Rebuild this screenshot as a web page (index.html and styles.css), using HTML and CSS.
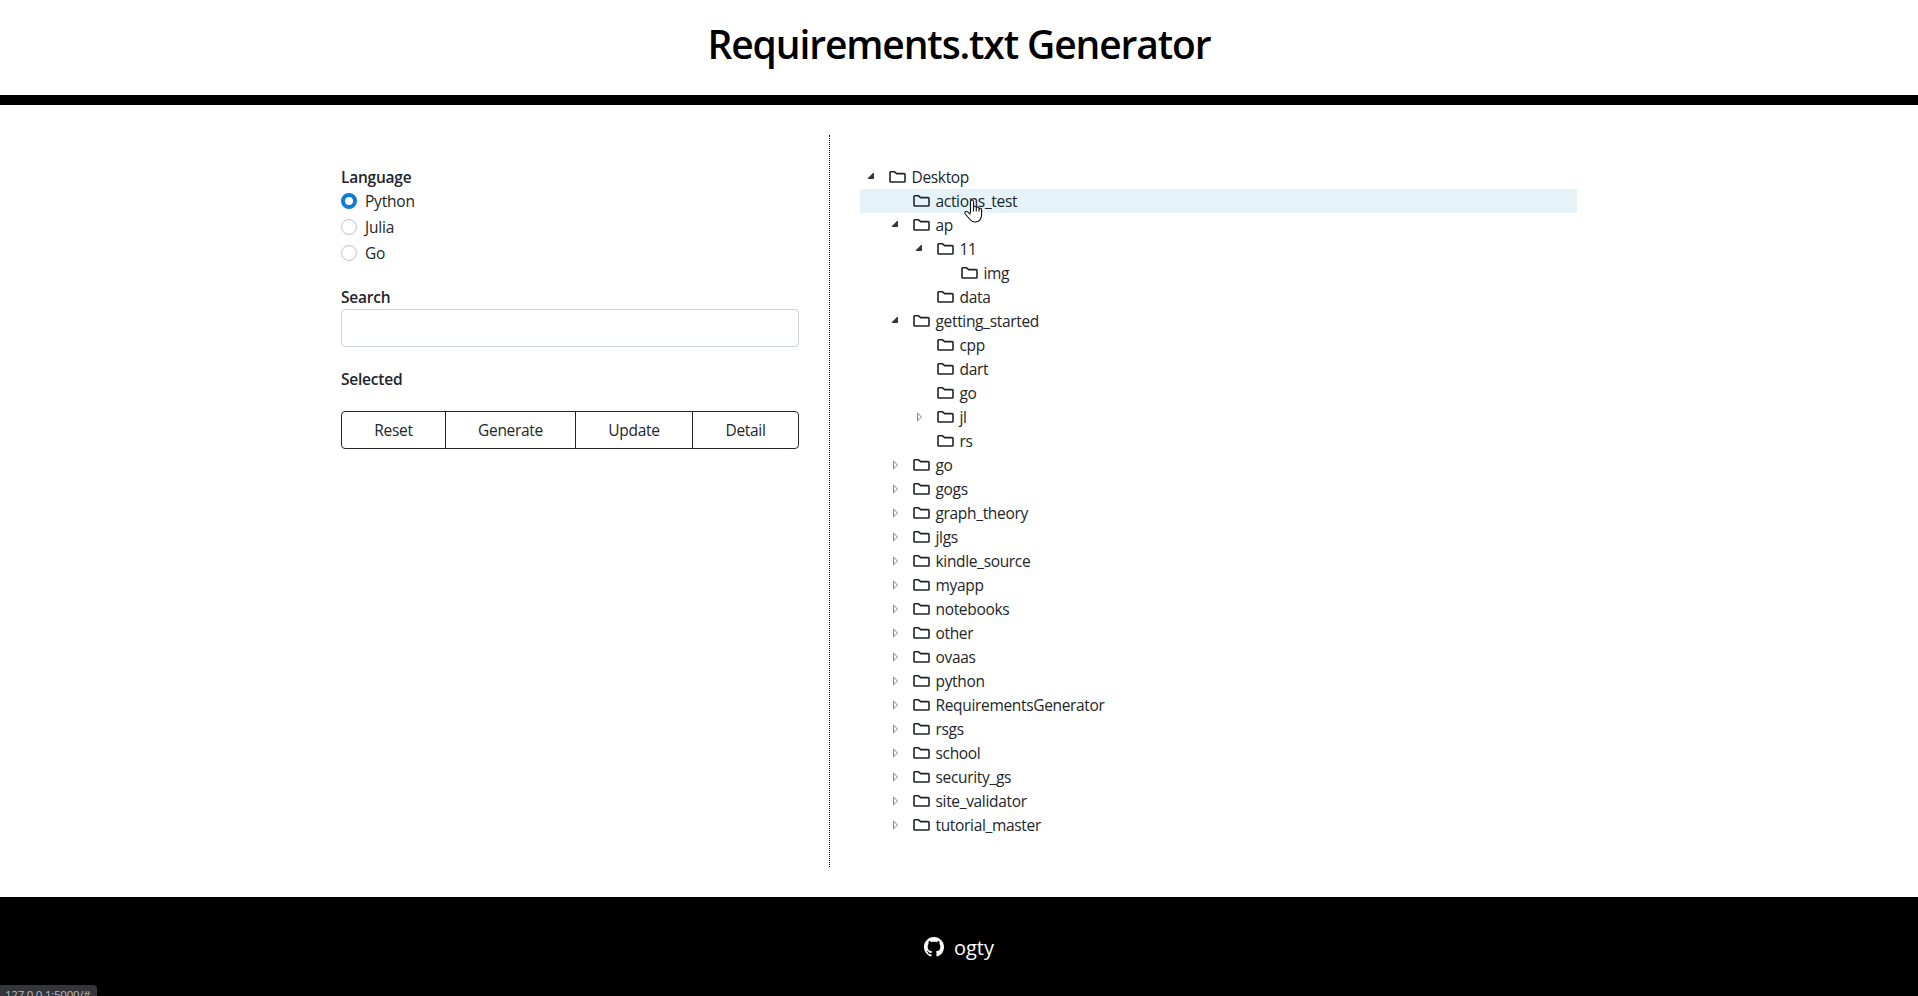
FILE: index.html
```html
<!DOCTYPE html>
<html lang="en">
<head>
<meta charset="utf-8">
<title>Requirements.txt Generator</title>
<link rel="stylesheet" href="styles.css">
</head>
<body>
<svg class="defs" aria-hidden="true">
  <symbol id="folder" viewBox="0 0 17 12"><path d="M1 10.2V1.6Q1 .8 1.8 .8H5.6L7.6 2.6H15.2Q16 2.6 16 3.4V10.2Q16 11 15.2 11H1.8Q1 11 1 10.2Z" fill="none" stroke="#212529" stroke-width="1.6"/></symbol>
  <symbol id="open" viewBox="0 0 8 8"><path d="M6.5 1V6.5H1Z" fill="#402a45" stroke="#212529" stroke-width=".8"/></symbol>
  <symbol id="closed" viewBox="0 0 8 10"><path d="M2.5 1.2V8.8L6.5 5Z" fill="none" stroke="#858585" stroke-width="1"/></symbol>
</svg>
<header class="header"><h1 class="title">Requirements.txt Generator</h1></header>
<main class="main">
  <section class="panel">
    <div class="label">Language</div>
    <div class="radios">
      <label class="radio"><span class="dot dot-on"></span><span>Python</span></label>
      <label class="radio"><span class="dot"></span><span>Julia</span></label>
      <label class="radio"><span class="dot"></span><span>Go</span></label>
    </div>
    <div class="label">Search</div>
    <input class="search" type="text" aria-label="Search">
    <div class="label selected">Selected</div>
    <div class="buttons">
      <button class="btn reset">Reset</button><button class="btn generate">Generate</button><button class="btn update">Update</button><button class="btn detail">Detail</button>
    </div>
  </section>
  <section class="tree" id="tree"></section>
</main>
<footer class="footer">
  <svg class="github" viewBox="0 0 16 16"><path fill="#fff" d="M8 0C3.58 0 0 3.58 0 8c0 3.54 2.29 6.53 5.47 7.59.4.07.55-.17.55-.38 0-.19-.01-.82-.01-1.49-2.01.37-2.53-.49-2.69-.94-.09-.23-.48-.94-.82-1.13-.28-.15-.68-.52-.01-.53.63-.01 1.08.58 1.23.82.72 1.21 1.87.87 2.33.66.07-.52.28-.87.51-1.07-1.78-.2-3.64-.89-3.64-3.95 0-.87.31-1.59.82-2.15-.08-.2-.36-1.02.08-2.12 0 0 .67-.21 2.2.82.64-.18 1.32-.27 2-.27s1.36.09 2 .27c1.53-1.04 2.2-.82 2.2-.82.44 1.1.16 1.92.08 2.12.51.56.82 1.27.82 2.15 0 3.07-1.87 3.75-3.65 3.95.29.25.54.73.54 1.48 0 1.07-.01 1.93-.01 2.2 0 .21.15.46.55.38A8.01 8.01 0 0 0 16 8c0-4.42-3.58-8-8-8z"/></svg>
  <span>ogty</span>
</footer>
<div class="status">127.0.0.1:5000/#</div>
<svg class="cursor" viewBox="0 0 19 24"><path d="M6.5 14V3Q6.5 1 8 1T9.5 3V9Q9.5 7 11 7.2T12.3 9Q12.5 7.8 13.8 8T15 10Q15.3 9 16.5 9.3T17.6 11V16Q17.6 18 16.5 20Q15 23 11 23Q8 23 6 20.5L1.3 15Q.3 13.5 1.5 12.8T4 13.2L6.5 15.5M9.5 9V12.5M12.3 9V12.5M15 10V12.5" fill="#fff" stroke="#111" stroke-width="1.1"/></svg>
<script src="tree.js"></script>
</body>
</html>
```
FILE: styles.css
```css
* { box-sizing: border-box; }
body {
  margin: 0; height: 996px; overflow: hidden; position: relative;
  display: flex; flex-direction: column;
  background: #fff; color: #212529;
  font: 15.5px/24px "Segoe UI", "Open Sans", "Noto Sans", sans-serif;
  letter-spacing: -.2px;
}
.defs { position: absolute; width: 0; height: 0; }
.header { height: 105px; border-bottom: 10px solid #000; text-align: center; }
.title { margin: 0; padding-top: 20px; font-size: 39px; line-height: 48px; font-weight: 600; color: #000; letter-spacing: -1.12px; }
.main { height: 792px; padding: 30px 341px; display: flex; }
.panel { width: 489px; padding: 30px 30px 0 0; border-right: 1px dotted #000; }
.label { height: 24px; font-weight: 600; letter-spacing: -.22px; }
.radios { display: flex; flex-direction: column; gap: 2px; margin-bottom: 20px; }
.radio { display: flex; align-items: center; gap: 8px; height: 24px; }
.dot { width: 16px; height: 16px; border: 1px solid #c0c4c8; border-radius: 50%; }
.dot-on { border: 4.5px solid #0f7ad8; }
.search { display: block; width: 458px; height: 38px; border: 1px solid #ced4da; border-radius: 4px; padding: 6px 12px; font: inherit; outline: none; }
.selected { margin: 20px 0; }
.buttons { display: flex; width: 458px; height: 38px; border: 1px solid #212529; border-radius: 4px; }
.btn { padding: 0; border: 0; border-right: 1px solid #212529; background: none; color: inherit; font: inherit; letter-spacing: -.3px; }
.reset { width: 104px; }
.generate { width: 130px; }
.update { width: 117px; }
.detail { flex: 1; border: 0; }
.tree { flex: 1; padding: 30px 0 0 30px; letter-spacing: -.33px; }
.row { display: flex; align-items: center; height: 24px; padding-left: 7px; }
.row-hover { background: #e5f3f9; }
.d1 { padding-left: 31px; }
.d2 { padding-left: 55px; }
.d3 { padding-left: 79px; }
.caret { width: 8px; height: 10px; margin-right: 14px; }
.caret-open { height: 8px; margin-top: -2px; }
.folder { width: 17px; height: 12px; margin-right: 5.5px; }
.footer { height: 99px; background: #000; color: #fff; display: flex; justify-content: center; align-items: center; gap: 10px; font-size: 20px; letter-spacing: 0; padding-top: 3px; }
.github { width: 20px; height: 20px; margin-top: -2px; }
.status { position: absolute; left: 0; top: 985px; width: 97px; height: 20px; padding-left: 5px; background: #35363a; color: #b4bac2; border-radius: 0 4px 0 0; font-size: 11.5px; line-height: 20px; letter-spacing: -.25px; white-space: nowrap; }
.cursor { position: absolute; left: 964px; top: 199px; width: 19px; height: 24px; }
```
FILE: tree.js
```js
const rows = [
  [0, "Desktop", "open"], [1, "actions_test"], [1, "ap", "open"], [2, "11", "open"],
  [3, "img"], [2, "data"], [1, "getting_started", "open"], [2, "cpp"], [2, "dart"],
  [2, "go"], [2, "jl", "closed"], [2, "rs"],
  ...["go", "gogs", "graph_theory", "jlgs", "kindle_source", "myapp", "notebooks", "other",
    "ovaas", "python", "RequirementsGenerator", "rsgs", "school", "security_gs",
    "site_validator", "tutorial_master"].map(n => [1, n, "closed"])
];
document.getElementById("tree").innerHTML = rows.map(([d, name, state]) =>
  `<div class="row d${d}${name === "actions_test" ? " row-hover" : ""}">` +
  `<svg class="caret caret-${state || "none"}">${state ? `<use href="#${state}"/>` : ""}</svg>` +
  `<svg class="folder"><use href="#folder"/></svg><span>${name}</span></div>`).join("");
```
